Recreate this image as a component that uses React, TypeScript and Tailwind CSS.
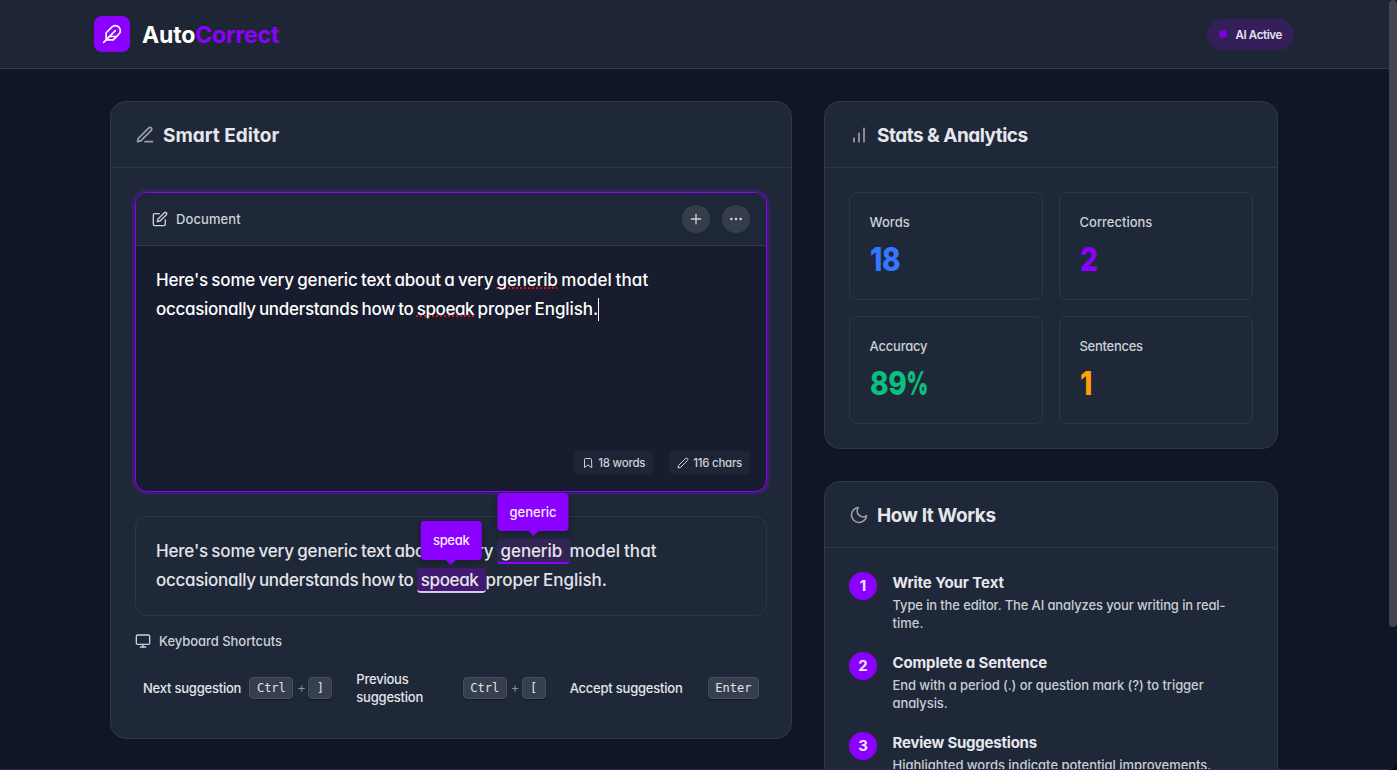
import type { ReactNode } from "react";
import {
  FiBarChart,
  FiBookmark,
  FiEdit,
  FiEdit2,
  FiEdit3,
  FiFeather,
  FiMonitor,
  FiMoon,
  FiMoreHorizontal,
  FiPlus,
} from "react-icons/fi";

function Panel({ icon, title, titleClass, children }: { icon: ReactNode; title: string; titleClass: string; children: ReactNode }) {
  return (
    <section className="rounded-2xl border border-[#2e3747] bg-[#1f2838]">
      <div className="flex h-[66px] items-center gap-2 border-b border-[#2e3747] px-6 text-[#9a9faa]">
        {icon}
        <h2 className={`whitespace-nowrap pt-[3px] text-[19px] font-bold text-[#e6e7ec] ${titleClass}`}>{title}</h2>
      </div>
      <div className="p-6">{children}</div>
    </section>
  );
}

function Kbd({ children }: { children: ReactNode }) {
  return (
    <kbd className="flex h-[22px] min-w-6 items-center justify-center rounded border border-[#464e5b] bg-[#363f4d] px-[6.5px] font-['DejaVu_Sans_Mono',monospace] text-[12px] leading-none tracking-normal text-[#e1e3e8] shadow-[0_1px_1px_rgba(0,0,0,0.3)]">
      {children}
    </kbd>
  );
}

function Shortcut({ label, keys }: { label: ReactNode; keys: string[] }) {
  return (
    <div className="flex h-[52px] items-center justify-between px-2">
      <span className="whitespace-nowrap text-[13px] font-medium leading-[18px] tracking-[-0.22px] text-[#e3e5ea]">{label}</span>
      <span className="flex shrink-0 items-center gap-1">
        <Kbd>{keys[0]}</Kbd>
        {keys[1] && (
          <>
            <span className="w-[7px] text-center text-[13px] text-[#8b919c]">+</span>
            <Kbd>{keys[1]}</Kbd>
          </>
        )}
      </span>
    </div>
  );
}

function Stat({ label, labelClass, color, children }: { label: string; labelClass: string; color: string; children: ReactNode }) {
  return (
    <div className="h-[108px] rounded-lg border border-[#2e3747] pl-[19.5px] pr-5 pt-5">
      <div className={`text-[13px] font-[450] leading-[18px] text-[#cdd1d8] ${labelClass}`}>{label}</div>
      <div className={`mt-2 origin-left scale-x-[0.85] whitespace-nowrap text-[33px] font-extrabold leading-10 tracking-[-0.5px] ${color}`}>{children}</div>
    </div>
  );
}

function Step({ n, title, titleClass, children }: { n: number; title: string; titleClass: string; children: ReactNode }) {
  return (
    <li className="flex h-[60px] gap-[15.5px]">
      <span className="flex size-7 shrink-0 items-center justify-center rounded-full bg-[#8c00ff] pt-px text-[15px] font-bold text-[#f1e6fb]">{n}</span>
      <div>
        <h3 className={`pt-px text-[15px] font-bold leading-5 text-[#e6e7ec] ${titleClass}`}>{title}</h3>
        <p className="mt-[3px] whitespace-nowrap text-[13px] font-[450] leading-[18px] text-[#c9cdd4]">{children}</p>
      </div>
    </li>
  );
}

function Suggestion({ word, fix, active }: { word: string; fix: string; active?: boolean }) {
  return (
    <span
      className={`relative inline-block h-[25px] whitespace-pre rounded border-b-2 px-1 leading-6 ${
        active ? "border-[#dcc6f8] bg-[#421a70] tracking-[-0.37px]" : "border-[#8c00ff] bg-[#322453] tracking-[-0.12px]"
      }`}
    >
      {word + " "}
      <span
        className={`absolute bottom-[31px] left-1/2 flex -translate-x-1/2 items-center rounded bg-[#8c00ff] px-3 text-[13px] font-medium leading-none text-[#f8effe] shadow-[0_2px_6px_rgba(0,0,0,0.25)] ${
          active ? "h-[39px] tracking-[-0.3px]" : "h-[38px] tracking-[0px]"
        }`}
      >
        {fix}
        <span className="absolute left-1/2 top-full size-0 -translate-x-1/2 border-x-[5px] border-t-[5px] border-x-transparent border-t-[#8c00ff]" />
      </span>
    </span>
  );
}

const misspelled =
  "underline decoration-[#d8101c] decoration-dotted decoration-2 underline-offset-[1px] [text-decoration-skip-ink:none]";

export default function App() {
  return (
    <div className="bg-[#08080c]">
      <div className="flex h-[770px] w-[1397px] overflow-hidden rounded-br-[10px] border-b border-[#2b2d42] bg-[#101628] font-['Inter','Liberation_Sans',sans-serif] text-[#e6e7ec] [font-feature-settings:'cv11']">
        <div className="w-[1389px] shrink-0">
          <header className="h-[69px] border-b border-[#323b49] bg-[#1e2635]">
            <div className="ml-[94px] flex h-[68px] w-[1200px] items-center justify-between">
              <div className="flex items-center gap-3">
                <div className="flex size-9 items-center justify-center rounded-lg bg-[#8c00ff] text-white">
                  <FiFeather size={20} />
                </div>
                <div className="pt-0.5 text-[23px] font-bold leading-8 tracking-[-0.15px] text-white">
                  Auto<span className="text-[#8c00ff]">Correct</span>
                </div>
              </div>
              <div className="flex h-[31px] items-center gap-2 rounded-full bg-[#351f5a] px-3">
                <span className="size-2 rounded-full bg-[#7a00dc]" />
                <span className="pt-[3px] text-[11.5px] font-semibold tracking-[-0.35px] text-[#e6e2ee]">AI Active</span>
              </div>
            </div>
          </header>

          <main className="ml-[94px] grid w-[1200px] grid-cols-[682px_454px] items-start gap-8 px-4 pt-8">
            <Panel icon={<FiEdit3 size={20} />} title="Smart Editor" titleClass="tracking-[0px]">
              <div className="flex h-[300px] flex-col overflow-hidden rounded-xl border border-[#8c00ff] bg-[#171c2e] shadow-[0_0_0_3px_rgba(140,0,255,0.22)]">
                <div className="flex h-[53px] shrink-0 items-center justify-between border-b border-[#323b49] bg-[#1e2737] px-4">
                  <div className="flex items-center gap-2 text-[#cdd1d8]">
                    <FiEdit size={16} />
                    <span className="pt-[2px] text-[13px] font-medium tracking-[0.1px]">Document</span>
                  </div>
                  <div className="flex gap-3 text-[#cdd1d8]">
                    <button className="flex size-7 items-center justify-center rounded-full bg-[#353d4b]">
                      <FiPlus size={16} />
                    </button>
                    <button className="flex size-7 items-center justify-center rounded-full bg-[#353d4b]">
                      <FiMoreHorizontal size={16} />
                    </button>
                  </div>
                </div>
                <div className="flex-1 px-5 pt-5 text-[17px] font-[450] leading-[28.8px] text-white [word-spacing:-1px]">
                  <div className="whitespace-nowrap tracking-[-0.175px]">
                    Here's some very generic text about a very <span className={misspelled}>generib</span>
                    <span className="tracking-[0.1px]"> model that</span>
                  </div>
                  <div className="flex items-center whitespace-pre tracking-[-0.3px]">
                    <span>
                      occasionally understands how to <span className={`tracking-[-0.42px] ${misspelled}`}>spoeak</span>
                      <span className="tracking-[-0.09px]"> proper English.</span>
                    </span>
                    <span className="h-[23px] w-px bg-white" />
                  </div>
                </div>
                <div className="flex justify-end gap-4 px-4 pb-[17px] text-[11.5px] font-[450] tracking-[-0.22px] text-[#cdd1d8]">
                  <span className="flex h-[23px] items-center gap-1 rounded bg-[#1e2536] px-2">
                    <FiBookmark size={12} />
                    <span className="pt-[2px]">18 words</span>
                  </span>
                  <span className="flex h-[23px] items-center gap-1 rounded bg-[#1e2536] px-2">
                    <FiEdit2 size={12} />
                    <span className="pt-[2px] tracking-[-0.27px]">116 chars</span>
                  </span>
                </div>
              </div>

              <div className="mt-6 h-[100px] rounded-xl border border-[#2e3747] px-5 pt-5 text-[17px] font-[450] leading-[28.8px] text-[#e3e5ea] [word-spacing:-1px]">
                <div className="h-[28.8px] whitespace-nowrap tracking-[-0.175px]">
                  Here's some very generic text about a very <Suggestion word="generib" fix="generic" />
                  <span className="tracking-[0.12px]">model that</span>
                </div>
                <div className="h-[28.8px] whitespace-nowrap tracking-[-0.3px]">
                  occasionally understands how to <Suggestion word="spoeak" fix="speak" active />
                  <span className="tracking-[-0.03px]">proper English.</span>
                </div>
              </div>

              <div className="mt-4 flex h-[18px] items-center gap-2 text-[#cdd1d8]">
                <FiMonitor size={16} />
                <span className="pt-[2px] text-[13px] font-[450] tracking-[-0.04px]">Keyboard Shortcuts</span>
              </div>
              <div className="mt-3 grid grid-cols-3 gap-2">
                <Shortcut label="Next suggestion" keys={["Ctrl", "]"]} />
                <Shortcut
                  label={
                    <>
                      Previous
                      <br />
                      suggestion
                    </>
                  }
                  keys={["Ctrl", "["]}
                />
                <Shortcut label="Accept suggestion" keys={["Enter"]} />
              </div>
            </Panel>

            <div className="flex flex-col gap-8">
              <Panel icon={<FiBarChart size={20} />} title="Stats & Analytics" titleClass="tracking-[-0.52px]">
                <div className="grid grid-cols-2 gap-4">
                  <Stat label="Words" labelClass="tracking-[0.05px]" color="text-[#3478ff]">18</Stat>
                  <Stat label="Corrections" labelClass="tracking-[0px]" color="text-[#8c00ff]">2</Stat>
                  <Stat label="Accuracy" labelClass="tracking-[-0.2px]" color="text-[#0ac07e]">
                    89<span className="inline-block origin-left scale-x-[0.74] font-black">%</span>
                  </Stat>
                  <Stat label="Sentences" labelClass="tracking-[-0.28px]" color="text-[#ff9f05]">1</Stat>
                </div>
              </Panel>

              <Panel icon={<FiMoon size={20} />} title="How It Works" titleClass="tracking-[-0.4px]">
                <ol className="flex flex-col gap-5">
                  <Step n={1} title="Write Your Text" titleClass="tracking-[-0.08px]">
                    <span className="tracking-[-0.13px]">Type in the editor. The AI analyzes your writing in real-</span>
                    <br />
                    time.
                  </Step>
                  <Step n={2} title="Complete a Sentence" titleClass="tracking-[-0.12px]">
                    <span className="tracking-[-0.08px]">End with a period (.) or question mark (?) to trigger</span>
                    <br />
                    <span className="tracking-[-0.1px]">analysis.</span>
                  </Step>
                  <Step n={3} title="Review Suggestions" titleClass="tracking-[-0.22px]">
                    <span className="tracking-[-0.03px]">Highlighted words indicate potential improvements.</span>
                  </Step>
                </ol>
              </Panel>
            </div>
          </main>
        </div>
        <div className="w-2 shrink-0 bg-[#101628]">
          <div className="h-[627px] rounded-full bg-[#41454f]" />
        </div>
      </div>
    </div>
  );
}
